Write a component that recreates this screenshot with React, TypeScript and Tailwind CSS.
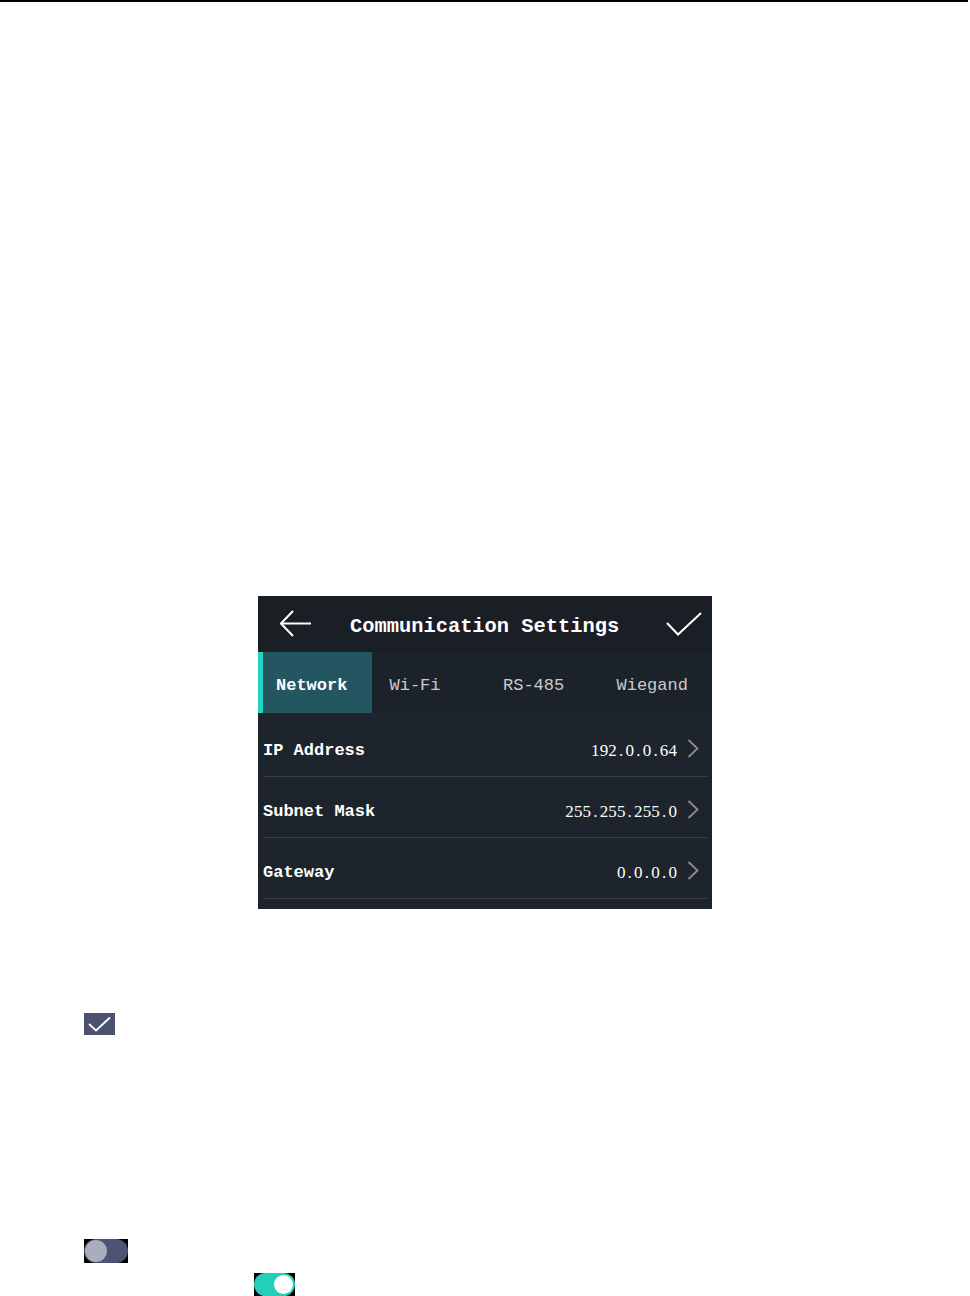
import * as React from "react"

const mono = { fontFamily: '"Liberation Mono", "DejaVu Sans Mono", monospace' }

const tabs = ['Network', 'Wi-Fi', 'RS-485', 'Wiegand']

const rows = [
  { label: 'IP Address', value: '192.0.0.64' },
  { label: 'Subnet Mask', value: '255.255.255.0' },
  { label: 'Gateway', value: '0.0.0.0' },
]

function Chevron() {
  return (
    <svg width="12" height="19" viewBox="0 0 12 19" className="shrink-0">
      <polyline points="1.5,1 10.5,9.5 1.5,18" fill="none" stroke="#8a8d92" strokeWidth="1.8" />
    </svg>
  )
}

export default function App() {
  return (
    <div className="w-[970px] h-[1296px] bg-white overflow-hidden" style={mono}>
      <div className="w-[968px] h-[2px] bg-black" />

      {/* device screen */}
      <div className="mt-[594px] ml-[258px] w-[454px] h-[313px] bg-[#1d242b] flex flex-col">
        <div className="h-[56px] bg-[#1a1e25] flex items-center">
          <svg width="32" height="28" viewBox="0 0 32 28" className="ml-[22px]">
            <line x1="1" y1="13.5" x2="31" y2="13.5" stroke="white" strokeWidth="2" />
            <polyline points="13,1 1,13.5 13,26" fill="none" stroke="white" strokeWidth="2" />
          </svg>
          <span className="ml-[38px] text-[20.4px] font-bold text-white leading-none pt-[6px]">
            Communication Settings
          </span>
          <svg width="36" height="24" viewBox="0 0 36 24" className="ml-auto mr-[10px]">
            <polyline points="1,11 12,22.5 35,1" fill="none" stroke="white" strokeWidth="2" />
          </svg>
        </div>

        <div className="h-[61px] bg-[#1c2229] grid grid-cols-4">
          {tabs.map((t, i) =>
            i === 0 ? (
              <div key={t} className="bg-[#235660] border-l-[5px] border-[#22d3be] pl-[13px] flex items-center pt-[6px]">
                <span className="text-[17px] font-bold text-white leading-none">{t}</span>
              </div>
            ) : (
              <div key={t} className="pl-[18px] flex items-center pt-[6px]">
                <span className="text-[17px] text-[#c9cbce] leading-none">{t}</span>
              </div>
            )
          )}
        </div>

        <div className="mx-[5px] pt-[3px] flex flex-col">
          {rows.map(r => (
            <div key={r.label} className="h-[61px] border-b border-[#3b4048] flex items-center pt-[8px] pr-[8px]">
              <span className="text-[17px] font-bold text-white leading-none">{r.label}</span>
              <span className="ml-auto text-[17px] text-white leading-none" style={{ fontFamily: '"Liberation Serif", serif' }}>
                {r.value.split('').map((c, k) => (
                  <span key={k} className="inline-block w-[8.6px] text-center">{c}</span>
                ))}
              </span>
              <span className="ml-[10px] flex items-center -mt-[4px]">
                <Chevron />
              </span>
            </div>
          ))}
        </div>
      </div>

      {/* confirm icon */}
      <div className="mt-[104px] ml-[84px] w-[31px] h-[22px] bg-[#4b5270] flex items-center justify-center">
        <svg width="25" height="16" viewBox="0 0 25 16">
          <polyline points="2,8 9,14.5 23,1.5" fill="none" stroke="white" strokeWidth="1.8" />
        </svg>
      </div>

      {/* switch off */}
      <div className="mt-[204px] ml-[84px] w-[44px] h-[24px] bg-black">
        <div className="w-full h-full rounded-full bg-[#4e5373] flex items-center pl-[1px]">
          <div className="w-[22px] h-[22px] rounded-full bg-[#a9adbd]" />
        </div>
      </div>

      {/* switch on */}
      <div className="mt-[10px] ml-[254px] w-[41px] h-[23px] bg-black">
        <div className="w-full h-full rounded-full bg-[#22cfb9] flex items-center justify-end pr-[2px]">
          <div className="w-[19px] h-[19px] rounded-full bg-white" />
        </div>
      </div>
    </div>
  )
}
